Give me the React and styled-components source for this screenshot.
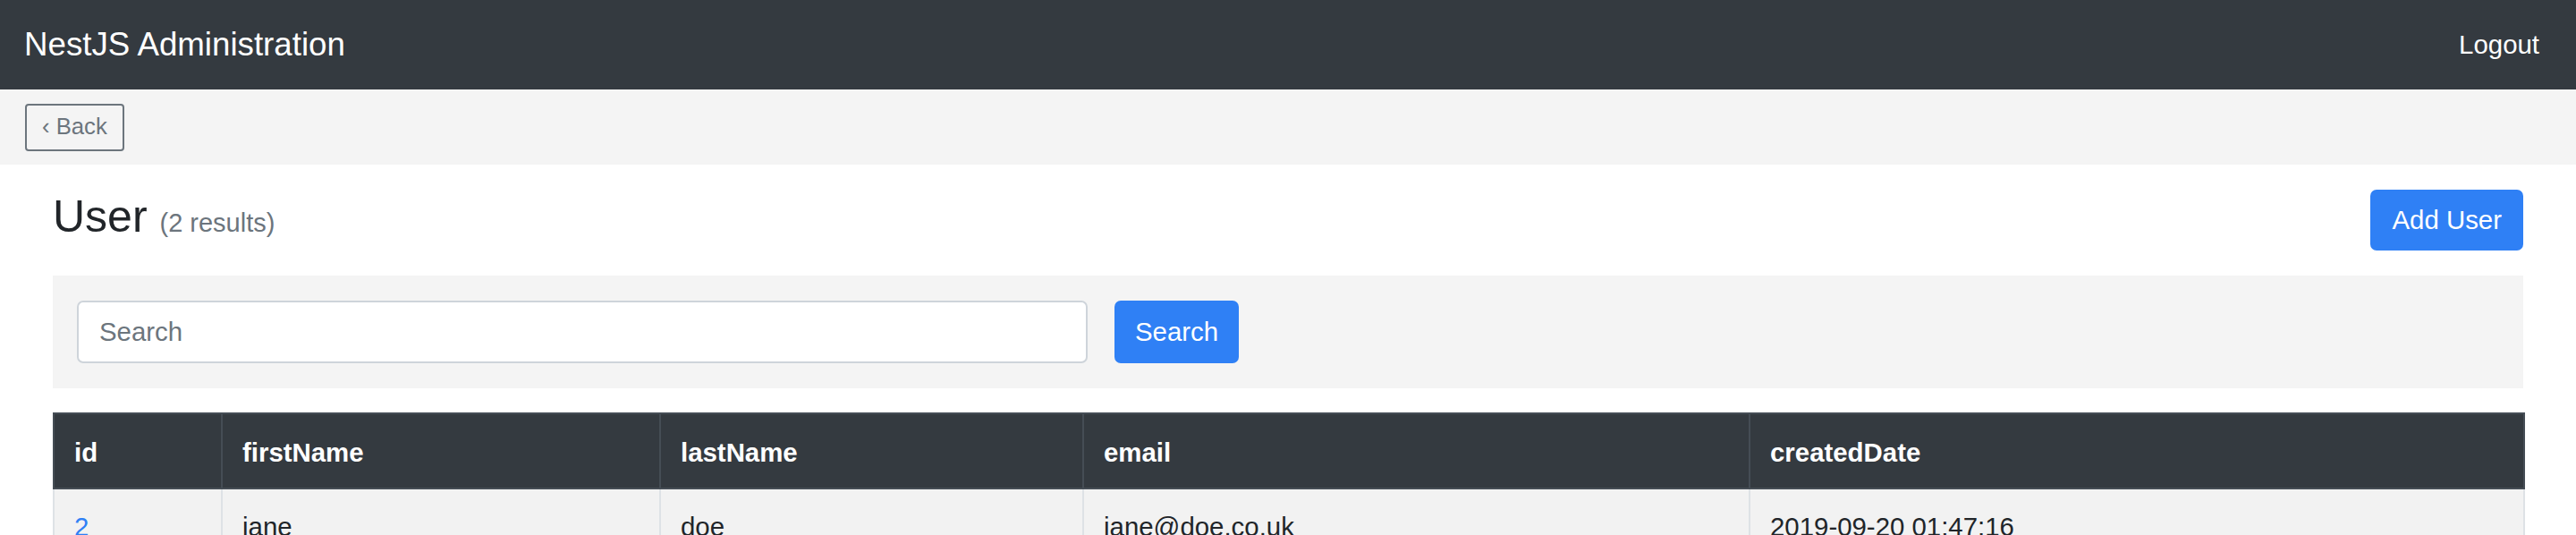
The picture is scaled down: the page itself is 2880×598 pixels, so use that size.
import React from 'react';
import styled, { createGlobalStyle } from 'styled-components';

const GlobalStyle = createGlobalStyle`
  html, body {
    margin: 0;
    padding: 0;
    overflow: hidden;
    background: #ffffff;
  }
  body {
    font-family: "Liberation Sans", Arial, Helvetica, sans-serif;
    color: #212529;
    font-size: 29.4px;
    line-height: 1.5;
  }
  *, *::before, *::after { box-sizing: border-box; }
`;

const FONT = `"Liberation Sans", Arial, Helvetica, sans-serif`;

const Navbar = styled.nav`
  height: 100px;
  background: #343a40;
  display: flex;
  align-items: center;
  justify-content: space-between;
  padding: 0 41px 0 27px;
`;

const Brand = styled.a`
  color: #ffffff;
  font-size: 36.7px;
  line-height: 1;
  text-decoration: none;
`;

const NavLink = styled.a`
  color: #ffffff;
  font-size: 29.4px;
  line-height: 1;
  text-decoration: none;
`;

const SubBar = styled.div`
  background: #f4f4f4;
  height: 84px;
  display: flex;
  align-items: center;
  padding: 0 28px;
`;

const OutlineButton = styled.button`
  height: 53px;
  padding: 0 17px;
  font-family: ${FONT};
  font-size: 25.7px;
  line-height: 1;
  color: #6c757d;
  background: transparent;
  border: 2px solid #6c757d;
  border-radius: 4px;
`;

const Main = styled.main`
  padding: 28px 59px 0;
`;

const HeaderRow = styled.div`
  display: flex;
  justify-content: space-between;
  align-items: flex-start;
  margin-bottom: 28px;
`;

const Title = styled.h3`
  margin: 0;
  font-size: 50px;
  font-weight: 500;
  line-height: 1.2;
  color: #212529;
`;

const Count = styled.small`
  font-size: 29px;
  font-weight: 400;
  color: #6c757d;
`;

const PrimaryButton = styled.button`
  height: ${(p) => p.$h}px;
  padding: 0 ${(p) => p.$px}px;
  font-family: ${FONT};
  font-size: 29.4px;
  line-height: 1;
  color: #ffffff;
  background: #2f80f5;
  border: none;
  border-radius: 7px;
  flex-shrink: 0;
`;

const SearchPanel = styled.form`
  background: #f4f4f4;
  padding: 28px 27px;
  display: flex;
  align-items: center;
  gap: 30px;
`;

const SearchInput = styled.input`
  width: 1130px;
  height: 70px;
  padding: 0 23px;
  font-family: ${FONT};
  font-size: 29.4px;
  color: #495057;
  background: #ffffff;
  border: 2px solid #ced4da;
  border-radius: 7px;
  outline: none;
  &::placeholder {
    color: #6c757d;
  }
`;

const Table = styled.table`
  margin-top: 27px;
  width: 100%;
  border-collapse: collapse;
  table-layout: fixed;
`;

const Col = styled.col`
  width: ${(p) => p.$w}px;
`;

const Th = styled.th`
  background: #343a40;
  color: #ffffff;
  border: 2px solid #454d55;
  padding: 21px 22px 17px;
  text-align: left;
  font-weight: 700;
  font-size: 29.4px;
  line-height: 1.5;
`;

const Td = styled.td`
  background: #f2f2f2;
  border: 2px solid #dee2e6;
  padding: 20px 22px;
  font-size: 29.4px;
  line-height: 1.5;
  color: #212529;
`;

const IdLink = styled.a`
  color: #2f80f5;
  text-decoration: none;
`;

const columns = [
  { key: 'id', w: 188 },
  { key: 'firstName', w: 490 },
  { key: 'lastName', w: 473 },
  { key: 'email', w: 745 },
  { key: 'createdDate', w: 866 },
];

const rows = [
  { id: 2, firstName: 'jane', lastName: 'doe', email: 'jane@doe.co.uk', createdDate: '2019-09-20 01:47:16' },
  { id: 1, firstName: 'john', lastName: 'doe', email: 'john@doe.co.uk', createdDate: '2019-09-20 01:46:52' },
];

export default function App() {
  return (
    <>
      <GlobalStyle />
      <Navbar>
        <Brand href="#">NestJS Administration</Brand>
        <NavLink href="#">Logout</NavLink>
      </Navbar>
      <SubBar>
        <OutlineButton type="button">‹ Back</OutlineButton>
      </SubBar>
      <Main>
        <HeaderRow>
          <Title>
            User <Count>(2 results)</Count>
          </Title>
          <PrimaryButton type="button" $h={68} $px={24}>Add User</PrimaryButton>
        </HeaderRow>
        <SearchPanel onSubmit={(e) => e.preventDefault()}>
          <SearchInput type="text" placeholder="Search" />
          <PrimaryButton type="submit" $h={70} $px={23}>Search</PrimaryButton>
        </SearchPanel>
        <Table>
          <colgroup>
            {columns.map((c) => (
              <Col key={c.key} $w={c.w} />
            ))}
          </colgroup>
          <thead>
            <tr>
              {columns.map((c) => (
                <Th key={c.key}>{c.key}</Th>
              ))}
            </tr>
          </thead>
          <tbody>
            {rows.map((r) => (
              <tr key={r.id}>
                <Td><IdLink href="#">{r.id}</IdLink></Td>
                <Td>{r.firstName}</Td>
                <Td>{r.lastName}</Td>
                <Td>{r.email}</Td>
                <Td>{r.createdDate}</Td>
              </tr>
            ))}
          </tbody>
        </Table>
      </Main>
    </>
  );
}
